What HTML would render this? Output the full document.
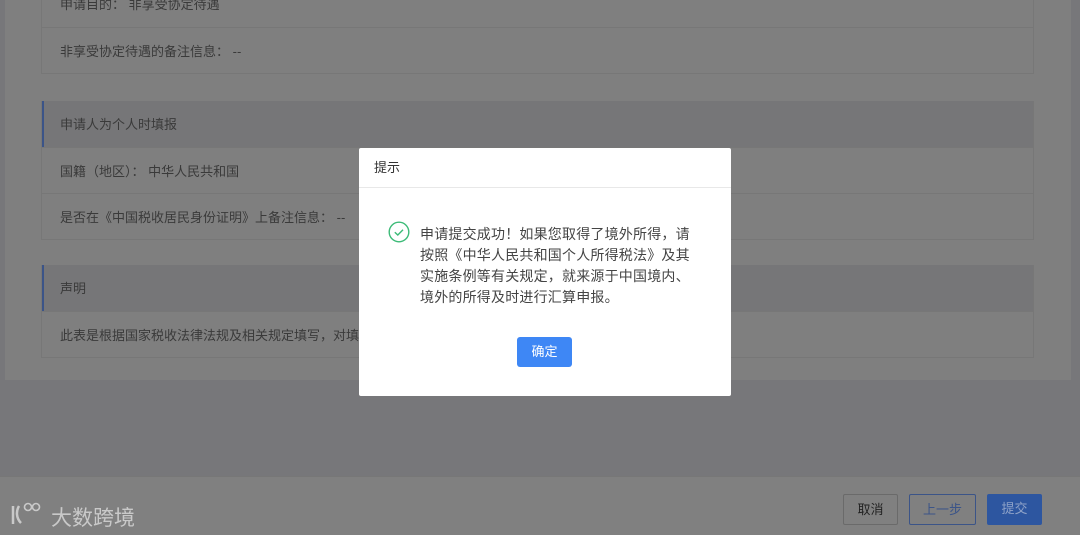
<!DOCTYPE html>
<html><head><meta charset="utf-8"><style>
*{margin:0;padding:0;box-sizing:border-box}
body{width:1080px;height:535px;overflow:hidden;background:#77777a;font-family:"Liberation Sans","Noto Sans CJK SC",sans-serif;position:relative}
.panel{position:absolute;left:5px;top:0;width:1066px;height:380px;background:#7f7f7f}
.card{position:absolute;left:41px;width:993px;border:1px solid #777;border-top:none}
.row{height:46px;border-top:1px solid #777;padding-left:18px;line-height:48px;font-size:13px;color:#3a3a3a}
.hd{background:#767678;border-left:2px solid #3b5488;padding-left:16px}
.foot{position:absolute;left:0;top:476px;width:1080px;height:59px;background:#808080;border-top:1px solid #777}
.btn{position:absolute;top:494px;height:31px;font-size:13px;text-align:center;line-height:29px;border-radius:2px}
.dlg{position:absolute;left:359px;top:148px;width:372px;height:248px;background:#fff;border-radius:2px}
.dlg .t{height:40px;border-bottom:1px solid #e8e8e8;padding-left:15px;line-height:40px;font-size:13px;color:#333}
.msg{position:absolute;left:61px;top:76px;width:280px;font-size:14px;line-height:21px;color:#444;letter-spacing:0.2px}
.ok{position:absolute;left:158px;top:189px;width:55px;height:30px;background:#3e87f5;color:#fff;font-size:13px;line-height:30px;text-align:center;border-radius:3px}
</style></head><body>
<div class="panel"></div>
<div class="card" style="top:-19px"><div class="row" style="border-top:none">申请目的：&nbsp;非享受协定待遇</div><div class="row">非享受协定待遇的备注信息：&nbsp;--</div></div>
<div class="card" style="top:101px"><div class="row hd" style="border-top:none">申请人为个人时填报</div><div class="row">国籍（地区）：&nbsp;中华人民共和国</div><div class="row">是否在《中国税收居民身份证明》上备注信息：&nbsp;--</div></div>
<div class="card" style="top:265px"><div class="row hd" style="border-top:none">声明</div><div class="row">此表是根据国家税收法律法规及相关规定填写，对填报</div></div>
<div class="foot"></div>
<svg style="position:absolute;left:9px;top:500px" width="40" height="28" viewBox="0 0 40 28" fill="none" stroke="#c9c9c9" stroke-width="2.5"><path d="M4 6v18M10 6c-3 5-3 12 2 17"/><circle cx="19" cy="7" r="3.5" stroke-width="1.6"/><circle cx="27" cy="7" r="3.5" stroke-width="1.6"/></svg>
<div style="position:absolute;left:51px;top:502px;font-size:21px;color:#c9c9c9;letter-spacing:0px">大数跨境</div>
<div class="btn" style="left:843px;width:55px;border:1px solid #6a6a6a;color:#222">取消</div>
<div class="btn" style="left:909px;width:67px;border:1px solid #3b5488;color:#3b5488">上一步</div>
<div class="btn" style="left:987px;width:55px;background:#2d56a0;color:#8fa3c8">提交</div>
<div class="dlg"><div class="t">提示</div>
<svg style="position:absolute;left:29px;top:73px" width="22" height="22" viewBox="0 0 22 22"><circle cx="11" cy="11" r="9.8" fill="none" stroke="#3dbb78" stroke-width="1.4"/><path d="M6.8 11.2l3 2.8 5.2-5.2" fill="none" stroke="#3dbb78" stroke-width="1.4"/></svg>
<div class="msg">申请提交成功！如果您取得了境外所得，请按照《中华人民共和国个人所得税法》及其实施条例等有关规定，就来源于中国境内、境外的所得及时进行汇算申报。</div>
<div class="ok">确定</div></div>
</body></html>
